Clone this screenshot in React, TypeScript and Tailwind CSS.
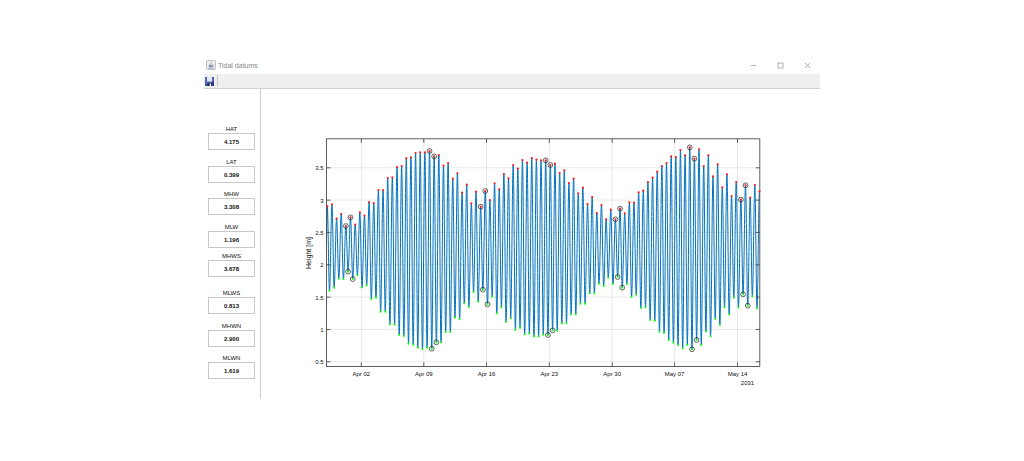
import type { ReactNode } from 'react';

interface Datum {
  name: string;
  value: string;
  spacing: string;
}

const datums: Datum[] = [
  { name: 'HAT', value: '4.175', spacing: 'mb-[7px]' },
  { name: 'LAT', value: '0.399', spacing: 'mb-[6px]' },
  { name: 'MHW', value: '3.308', spacing: 'mb-[7px]' },
  { name: 'MLW', value: '1.196', spacing: 'mb-[3px]' },
  { name: 'MHWS', value: '3.678', spacing: 'mb-[11px]' },
  { name: 'MLWS', value: '0.813', spacing: 'mb-[7px]' },
  { name: 'MHWN', value: '2.900', spacing: 'mb-[6px]' },
  { name: 'MLWN', value: '1.619', spacing: 'mb-[20px]' },
];

// High waters, in thirds of a chart unit below HIGH_TOP
const HIGH_TOP = 41;
const highs = [
  229, 223, 266, 252, 288, 262, 284, 247, 257, 216, 219, 180, 180, 144, 142, 111, 108, 85, 82, 69, 67, 67, 63, 79, 75,
  107, 99, 146, 130, 188, 164, 220, 185, 230, 183, 210, 160, 178, 132, 145, 105, 116, 90, 98, 84, 89, 91, 91, 105, 101,
  129, 121, 159, 146, 190, 173, 222, 201, 249, 225, 268, 239, 268, 236, 250, 217, 218, 187, 182, 156, 143, 125, 108, 99,
  79, 81, 60, 76, 52, 86, 58, 108, 76, 139, 103, 172, 133, 198, 156, 209, 166, 203, 165, 184,
];

// Low waters, in thirds of a chart unit below LOW_TOP
const LOW_TOP = 166;
const lows = [
  107, 98, 71, 72, 50, 72, 61, 97, 91, 132, 128, 170, 170, 208, 209, 240, 243, 266, 269, 278, 282, 278, 281, 262, 262,
  231, 231, 188, 192, 145, 156, 111, 140, 104, 148, 125, 175, 157, 201, 190, 224, 218, 238, 236, 244, 244, 239, 240,
  226, 227, 205, 205, 178, 178, 146, 146, 115, 115, 86, 93, 68, 87, 66, 98, 87, 126, 119, 159, 157, 195, 197, 230, 234,
  255, 263, 270, 280, 270, 283, 255, 270, 229, 244, 192, 210, 157, 178, 128, 157, 118, 152, 124, 160,
];

// Spring and neap tides, the same positions in both series
const springNeap = [4, 5, 22, 23, 33, 34, 47, 48, 62, 63, 78, 79, 89, 90];

const STEP = 4.647;
const highPoints = highs.map((v, i) => ({ x: 66.3 + i * STEP, y: HIGH_TOP + v / 3 }));
const lowPoints = lows.map((v, i) => ({ x: 68.5 + i * STEP, y: LOW_TOP + v / 3 }));

const PLOT = { left: 65.5, right: 498.8, top: 49.8, bottom: 277.5 };

const xTicks = [
  { x: 100.3, label: 'Apr 02' },
  { x: 162.8, label: 'Apr 09' },
  { x: 225.5, label: 'Apr 16' },
  { x: 288.3, label: 'Apr 23' },
  { x: 351.2, label: 'Apr 30' },
  { x: 413.6, label: 'May 07' },
  { x: 476.5, label: 'May 14' },
];

const yTicks = ['3.5', '3', '2.5', '2', '1.5', '1', '0.5'].map((label, i) => ({ y: 78.8 + i * 32.33, label }));

function buildCurve() {
  let d = `M65.4 154 L${highPoints[0].x} ${highPoints[0].y}`;
  let prev = highPoints[0];
  for (let i = 1; i < highPoints.length + lowPoints.length; i++) {
    const next = i % 2 ? lowPoints[(i - 1) / 2] : highPoints[i / 2];
    const w = (next.x - prev.x) * 0.37;
    d += ` C${(prev.x + w).toFixed(2)} ${prev.y.toFixed(2)} ${(next.x - w).toFixed(2)} ${next.y.toFixed(2)} ${next.x.toFixed(2)} ${next.y.toFixed(2)}`;
    prev = next;
  }
  return d;
}

function TideChart() {
  return (
    <svg
      viewBox="0 0 559 310"
      className="block w-full"
      role="img"
      aria-label="Height [m]"
      fontFamily="'Liberation Sans', Arial, sans-serif"
      fill="#111"
    >
      <g stroke="#e2e2e2" strokeWidth="0.8">
        {xTicks.map((t) => (
          <line key={t.label} x1={t.x} x2={t.x} y1={PLOT.top} y2={PLOT.bottom} />
        ))}
        {yTicks.map((t) => (
          <line key={t.label} x1={PLOT.left} x2={PLOT.right} y1={t.y} y2={t.y} />
        ))}
      </g>

      <path d={buildCurve()} fill="none" stroke="#0072bd" strokeWidth="1" strokeLinejoin="round" />

      <g stroke="#4d4d4d" strokeWidth="0.9" fill="none">
        <rect
          x={PLOT.left}
          y={PLOT.top}
          width={PLOT.right - PLOT.left}
          height={PLOT.bottom - PLOT.top}
        />
        {xTicks.map((t) => (
          <path key={t.label} d={`M${t.x} ${PLOT.top}v4 M${t.x} ${PLOT.bottom}v-4`} />
        ))}
        {yTicks.map((t) => (
          <path key={t.label} d={`M${PLOT.left} ${t.y}h4 M${PLOT.right} ${t.y}h-4`} />
        ))}
      </g>

      {highPoints.map((p, i) => (
        <circle key={i} cx={p.x} cy={p.y} r="1.1" fill="#ff1a1a" />
      ))}
      {lowPoints.map((p, i) => (
        <circle key={i} cx={p.x} cy={p.y} r="1.1" fill="#1aff1a" />
      ))}
      <g fill="none" stroke="#222" strokeWidth="0.7">
        {springNeap.map((i) => (
          <g key={i}>
            <circle cx={highPoints[i].x} cy={highPoints[i].y} r="2.4" />
            <circle cx={lowPoints[i].x} cy={lowPoints[i].y} r="2.4" />
          </g>
        ))}
      </g>

      <g fontSize="6" textAnchor="middle">
        {xTicks.map((t) => (
          <text key={t.label} x={t.x} y="287">
            {t.label}
          </text>
        ))}
        <text x="486.5" y="296">
          2031
        </text>
      </g>
      <g fontSize="6" textAnchor="end">
        {yTicks.map((t) => (
          <text key={t.label} x="62.5" y={t.y + 2.6}>
            {t.label}
          </text>
        ))}
      </g>
      <text fontSize="7" textAnchor="middle" transform="translate(50 164) rotate(-90)">
        Height [m]
      </text>
    </svg>
  );
}

function JavaIcon() {
  return (
    <svg viewBox="0 0 10 10" className="size-[10px]" aria-hidden="true">
      <rect x="0.5" y="0.5" width="9" height="9" rx="1" fill="#e9edf0" stroke="#a9b3ba" strokeWidth="0.8" />
      <path d="M5.4 1.5c.8 1-1.4 1.6-.4 3" fill="none" stroke="#d99a6a" strokeWidth="0.9" />
      <path d="M2.8 4.8h3.9v1.4c0 .7-.6 1-1.2 1H4c-.7 0-1.2-.4-1.2-1z" fill="#8296a8" />
      <path d="M6.7 5.1c1.2-.1 1.2 1.4-.1 1.4M2 8.2h6" fill="none" stroke="#8296a8" strokeWidth="0.7" />
    </svg>
  );
}

function SaveIcon() {
  return (
    <svg viewBox="0 0 9 9" className="block size-[9px]" aria-hidden="true">
      <path d="M0 0h9v9H1L0 8z" fill="#5563b8" />
      <path d="M0 8l1 1h8V4L5 7z" fill="#303b82" />
      <path d="M2 0h5v4.5H2z" fill="#dce8f5" />
      <path d="M2.5 6h4v3h-4z" fill="#20274f" />
      <path d="M4.7 6.5h1.3V9H4.7z" fill="#fff" />
    </svg>
  );
}

function WindowButton({ label, children }: { label: string; children: ReactNode }) {
  return (
    <button type="button" aria-label={label} className="flex h-full w-[27px] items-center justify-center">
      <svg viewBox="0 0 7 7" className="size-[7px]" fill="none" stroke="#999" strokeWidth="0.8">
        {children}
      </svg>
    </button>
  );
}

export default function App() {
  return (
    <div className="min-h-screen bg-white pt-14 font-['Liberation_Sans',Arial,sans-serif] text-[#111]">
      <div className="mx-auto w-full max-w-[616px]">
        <header className="-mr-px flex h-[18px] items-center pl-[2px]">
          <JavaIcon />
          <h1 className="ml-[2px] flex-1 pt-px text-[7px] leading-[10px] text-[#888]">Tidal datums</h1>
          <WindowButton label="Minimize">
            <path d="M1 3.5h5" />
          </WindowButton>
          <WindowButton label="Maximize">
            <path d="M1 1h5v5H1z" />
          </WindowButton>
          <WindowButton label="Close">
            <path d="M1 1l5 5M6 1L1 6" />
          </WindowButton>
        </header>

        <div className="flex h-[15px] items-center border-b border-[#d0d0d0] bg-[#efefef] pl-px">
          <button type="button" aria-label="Save">
            <SaveIcon />
          </button>
          <span className="ml-[3px] h-3 w-px bg-[#c8c8c8]" />
        </div>

        <main className="flex">
          <aside className="w-[57px] shrink-0 border-r border-[#d0d0d0] pt-[35px] pr-[5px] pl-1">
            {datums.map((d) => (
              <div key={d.name} className={d.spacing}>
                <label htmlFor={d.name} className="block pt-px text-center text-[6px] leading-[8px]">
                  {d.name}
                </label>
                <input
                  id={d.name}
                  readOnly
                  value={d.value}
                  className="block h-[17px] w-full border border-[#c8c8c8] bg-white text-center text-[6px] font-bold"
                />
              </div>
            ))}
          </aside>
          <div className="min-w-0 flex-1">
            <TideChart />
          </div>
        </main>
      </div>
    </div>
  );
}
